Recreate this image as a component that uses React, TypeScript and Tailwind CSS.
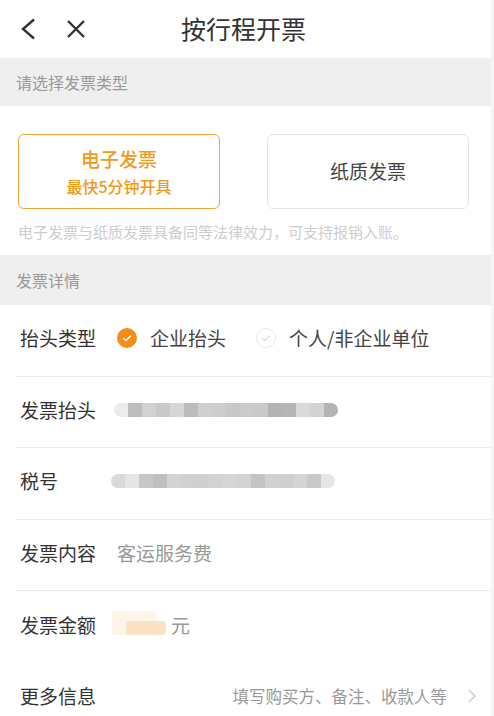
const font = { fontFamily: '"Noto Sans CJK SC", "Noto Sans", sans-serif' };

function Blur({ cells }: { cells: string[] }) {
	return (
		<div className="flex h-[14px] overflow-hidden rounded-full">
			{cells.map((c, i) => (
				<div key={i} className="h-full w-[14px]" style={{ background: c }} />
			))}
		</div>
	);
}

function Row({ label, children, last }: { label: string; children?: React.ReactNode; last?: boolean }) {
	return (
		<div className={`ml-4 flex h-[71.5px] items-center pb-1 pr-3 ${last ? "" : "border-b border-[#ececec]"}`}>
			<span className="w-[101px] shrink-0 pl-1 text-[19px] text-[#333]">{label}</span>
			{children}
		</div>
	);
}

export default function App() {
	const titleCells = ["#ececec", "#bdbdbd", "#d2d2d2", "#c9c9c9", "#d6d6d6", "#bcbcbc", "#cfcfcf", "#cdcdcd", "#c8c8c8", "#cbcbcb", "#c9c9c9", "#b3b3b3", "#b5b5b5", "#dadada", "#d3d3d3", "#b3b3b3"];
	const taxCells = ["#d9d9d9", "#e6e6e6", "#c7c7c7", "#bfbfbf", "#d3d3d3", "#d0d0d0", "#cfcfcf", "#d2d2d2", "#d6d6d6", "#d3d3d3", "#c4c4c4", "#d1d1d1", "#cfcfcf", "#d4d4d4", "#c9c9c9", "#e6e6e6"];
	return (
		<div className="flex h-[716px] w-[494px] overflow-hidden bg-white" style={font}>
			<div className="w-[491px]">
				<div className="flex h-[58px] items-center px-5">
					<svg width="16" height="22" viewBox="0 0 16 22">
						<path d="M14 1.5 L3 11 L14 20.5" fill="none" stroke="#333" strokeWidth="2.4" />
					</svg>
					<svg width="20" height="20" viewBox="0 0 20 20" className="ml-[30px]">
						<path d="M2 2 L18 18 M18 2 L2 18" fill="none" stroke="#333" strokeWidth="2.4" />
					</svg>
					<span className="ml-[95px] text-[25px] text-[#333]">按行程开票</span>
				</div>
				<div className="flex h-[48px] items-center bg-[#efefef] px-4 text-[16px] text-[#999]">请选择发票类型</div>
				<div className="flex flex-col px-[18px] pt-[28px]">
					<div className="flex gap-[47px]">
						<div className="flex h-[75px] w-[202px] flex-col items-center justify-center rounded-md border-[1.5px] border-[#f5a531] text-[#f09a19]">
							<span className="text-[19px] font-medium leading-[28px]">电子发票</span>
							<span className="text-[16px] font-medium leading-[26px]">最快5分钟开具</span>
						</div>
						<div className="flex h-[75px] w-[202px] items-center justify-center rounded-md border border-[#e4e4e4] text-[19px] text-[#444]">纸质发票</div>
					</div>
					<div className="flex h-[46px] items-center text-[15px] text-[#cdcdcd]">电子发票与纸质发票具备同等法律效力，可支持报销入账。</div>
				</div>
				<div className="flex h-[50px] items-center bg-[#efefef] px-4 text-[16px] text-[#999]">发票详情</div>
				<Row label="抬头类型">
					<div className="flex h-5 w-5 items-center justify-center rounded-full bg-[#f58d1b]">
						<svg width="10" height="8" viewBox="0 0 10 8">
							<path d="M1 4 L4 6.5 L9 1.5" fill="none" stroke="#fff" strokeWidth="1.4" />
						</svg>
					</div>
					<span className="ml-[13px] text-[19px] text-[#444]">企业抬头</span>
					<div className="ml-[30px] flex h-5 w-5 items-center justify-center rounded-full border border-[#e8e8e8]">
						<svg width="10" height="8" viewBox="0 0 10 8">
							<path d="M1 4 L4 6.5 L9 1.5" fill="none" stroke="#ddd" strokeWidth="1.2" />
						</svg>
					</div>
					<span className="ml-[13px] text-[19px] text-[#444]">个人/非企业单位</span>
				</Row>
				<Row label="发票抬头">
					<div className="-ml-[3px]">
						<Blur cells={titleCells} />
					</div>
				</Row>
				<Row label="税号">
					<div className="-ml-[6px]">
						<Blur cells={taxCells} />
					</div>
				</Row>
				<Row label="发票内容">
					<span className="text-[19px] text-[#999]">客运服务费</span>
				</Row>
				<Row label="发票金额" last>
					<div className="relative -ml-[5px] h-[28px] w-[56px]">
						<div className="absolute left-0 top-0 h-[24px] w-[44px] bg-[#fdf4ea]" />
						<div className="absolute left-[14px] top-[10px] h-[14px] w-[40px] rounded-sm bg-[#fbe2c6]" />
					</div>
					<span className="ml-[3px] text-[19px] text-[#999]">元</span>
				</Row>
				<Row label="更多信息" last>
					<span className="ml-auto text-[16.5px] text-[#999]">填写购买方、备注、收款人等</span>
					<svg width="10" height="16" viewBox="0 0 10 16" className="ml-[20px] mr-[2px]">
						<path d="M2 2 L8 8 L2 14" fill="none" stroke="#ccc" strokeWidth="1.4" />
					</svg>
				</Row>
			</div>
			<div className="w-[3px] bg-[#f2f4f7]" />
		</div>
	);
}
